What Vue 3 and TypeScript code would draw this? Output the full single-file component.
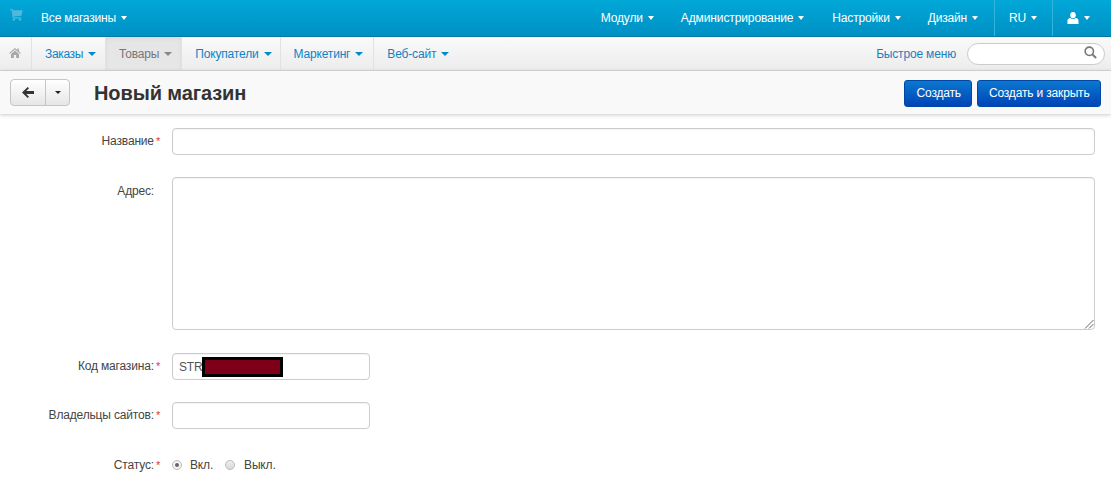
<script setup lang="ts">
const topRight = ['Модули', 'Администрирование', 'Настройки', 'Дизайн']
const subMenu = [
  { label: 'Заказы', active: false },
  { label: 'Товары', active: true },
  { label: 'Покупатели', active: false },
  { label: 'Маркетинг', active: false },
  { label: 'Веб-сайт', active: false },
]
</script>

<template>
  <div class="page">
    <header class="topbar">
      <div class="top-left">
        <svg class="cart" viewBox="0 0 14 13" width="13" height="12">
          <path fill="#4fb8dc" d="M0 0h2.6l.4 1.4h10.6l-1.2 5.8-8.4.8.2 1h8v1.3H2.9L1.7 1.3H0z" />
          <circle cx="4.2" cy="11.5" r="1.3" fill="#4fb8dc" />
          <circle cx="10.8" cy="11.5" r="1.3" fill="#4fb8dc" />
        </svg>
        <span class="store">Все магазины<i class="caret white"></i></span>
      </div>
      <nav class="top-right">
        <span v-for="m in topRight" :key="m" class="top-item">{{ m }}<i class="caret white"></i></span>
        <span class="top-item boxed lang">RU<i class="caret white"></i></span>
        <span class="top-item boxed user">
          <svg viewBox="0 0 12 13" width="12" height="12">
            <ellipse cx="6" cy="3.4" rx="3" ry="3.3" fill="#fff" />
            <path fill="#fff" d="M0 13V9.6C0 7.8 1.4 6.8 3 6.6c.8.7 1.9 1 3 1s2.200-.3 3-1c1.600.2 3 1.200 3 3V13z" />
          </svg>
          <i class="caret white"></i>
        </span>
      </nav>
    </header>

    <div class="subbar">
      <div class="sub-left">
        <span class="home">
          <svg viewBox="0 0 14 12" width="12" height="10">
            <path fill="#a9a9a9" d="M7 0 0 6l.8.9L7 1.700l6.200 5.200.8-.9-2.300-2V.6H10v2.100zM2.200 7.200V12h3.400V8.500h2.800V12h3.400V7.200L7 3.100z" />
          </svg>
        </span>
        <span v-for="s in subMenu" :key="s.label" class="sub-item" :class="{ active: s.active }">{{ s.label }}<i class="caret"></i></span>
      </div>
      <div class="sub-right">
        <span class="quick">Быстрое меню</span>
        <div class="search">
          <svg viewBox="0 0 14 14" width="13" height="13">
            <circle cx="5.700" cy="5.700" r="4.500" fill="none" stroke="#777" stroke-width="1.700" />
            <path d="m9 9 4 4" stroke="#777" stroke-width="2.200" />
          </svg>
        </div>
      </div>
    </div>

    <div class="actionbar">
      <div class="action-left">
        <div class="btn-group">
          <span class="back">
            <svg viewBox="0 0 12 11" width="12" height="11">
              <path fill="#333" d="M5.700 0 7 1.300 4.300 4H12v3H4.300L7 9.700 5.700 11 0 5.500z" />
            </svg>
          </span>
          <span class="drop"><i class="caret dark"></i></span>
        </div>
        <h1>Новый магазин</h1>
      </div>
      <div class="action-right">
        <span class="primary">Создать</span>
        <span class="primary">Создать и закрыть</span>
      </div>
    </div>

    <form class="form">
      <div class="row r-name">
        <label>Название<b>*</b></label>
        <div class="input full"></div>
      </div>
      <div class="row r-addr">
        <label class="no-star">Адрес:</label>
        <div class="textarea">
          <svg class="grip" viewBox="0 0 10 10" width="10" height="10">
            <path d="M9.500 1 1 9.500M9.500 5 5 9.500" stroke="#666" stroke-width="1" />
          </svg>
        </div>
      </div>
      <div class="row r-code">
        <label>Код магазина:<b>*</b></label>
        <div class="input small"><span class="str">STR</span><span class="redact"></span></div>
      </div>
      <div class="row r-owner">
        <label>Владельцы сайтов:<b>*</b></label>
        <div class="input small"></div>
      </div>
      <div class="row r-status">
        <label>Статус:<b>*</b></label>
        <div class="radios">
          <span class="radio on"></span><span class="r-label">Вкл.</span>
          <span class="radio"></span><span class="r-label off">Выкл.</span>
        </div>
      </div>
    </form>
  </div>
</template>

<style>
html, body { margin: 0; background: #fff; }
</style>

<style scoped>
.page {
  width: 1111px;
  height: 495px;
  overflow: hidden;
  font-family: "Liberation Sans", Arial, sans-serif;
  font-size: 12px;
  letter-spacing: -0.17px;
  color: #333;
  position: relative;
}
.caret {
  display: inline-block;
  width: 0;
  height: 0;
  margin-left: 5px;
  vertical-align: middle;
  border-left: 4px solid transparent;
  border-right: 4px solid transparent;
  border-top: 4px solid #0088cc;
}
.caret.white {
  border-top: 4px solid #fff;
  border-left-width: 3.5px;
  border-right-width: 3.5px;
}
.caret.dark {
  border-top: 3px solid #222;
  border-left-width: 3.5px;
  border-right-width: 3.5px;
  margin: 0;
}

.topbar {
  height: 37px;
  box-sizing: border-box;
  display: flex;
  justify-content: space-between;
  background: linear-gradient(to bottom, #00a8d8, #0090c4);
  border-bottom: 1px solid #0278a3;
  color: #fff;
}
.top-left { display: flex; align-items: center; padding-left: 10px; }
.cart { margin-top: -6px; }
.store { margin-left: 18px; display: flex; align-items: center; }
.top-right { display: flex; align-items: stretch; }
.top-item { display: flex; align-items: center; padding: 0 0 0 27px; }
.top-item:nth-child(1) { padding-left: 0; }
.top-item:nth-child(2) { letter-spacing: -0.11px; }
.top-item:nth-child(3) { padding-left: 28px; }
.boxed { border-left: 1px solid #33b4dc; margin-left: 16px; }
.lang { padding: 0 15px 0 14px; }
.user { margin-left: 0; padding: 0 21px 0 14px; }

.subbar {
  height: 34px;
  box-sizing: border-box;
  display: flex;
  justify-content: space-between;
  background: linear-gradient(to bottom, #fafafa, #ececec);
  border-bottom: 1px solid #d9d9d9;
}
.sub-left { display: flex; }
.home {
  width: 32px;
  box-sizing: border-box;
  display: flex;
  align-items: center;
  justify-content: center;
  padding: 0 2px 2px 0;
  border-right: 1px solid #e2e2e2;
}
.sub-item {
  display: flex;
  align-items: center;
  padding: 0 9px 0 13px;
  color: #0a84c6;
  border-right: 1px solid #e2e2e2;
}
.sub-item:nth-child(2) { letter-spacing: -0.35px; }
.sub-item:nth-child(4) { padding-right: 8px; }
.sub-item:nth-child(5) { padding-right: 10px; }
.sub-item:last-child { border-right: none; }
.sub-item.active {
  color: #777;
  background: #e6e6e6;
  box-shadow: inset 0 2px 4px rgba(0, 0, 0, 0.05);
}
.sub-item.active .caret { border-top-color: #888; }
.sub-right { display: flex; align-items: center; padding-right: 6px; }
.quick { color: #1a80bd; margin-right: 11px; }
.search {
  width: 138px;
  height: 22px;
  box-sizing: border-box;
  background: #fff;
  border: 1px solid #ccc;
  border-radius: 11px;
  display: flex;
  justify-content: flex-end;
  padding: 2px 7px 0 0;
}

.actionbar {
  height: 43px;
  box-sizing: border-box;
  display: flex;
  justify-content: space-between;
  align-items: center;
  padding: 0 10px;
  background: #f9f9f9;
  box-shadow: 0 1px 4px rgba(0, 0, 0, 0.22);
  position: relative;
}
.action-left { display: flex; align-items: center; }
.btn-group {
  display: flex;
  height: 27px;
  box-sizing: border-box;
  border: 1px solid #c5c5c5;
  border-radius: 4px;
  background: linear-gradient(to bottom, #fff, #e6e6e6);
  margin-right: 24px;
}
.back {
  width: 34px;
  display: flex;
  align-items: center;
  justify-content: center;
  border-right: 1px solid #c5c5c5;
}
.drop {
  width: 23px;
  display: flex;
  align-items: center;
  justify-content: center;
}
h1 {
  margin: 0;
  padding-top: 2px;
  font-size: 20px;
  line-height: 27px;
  font-weight: bold;
  letter-spacing: -0.1px;
  color: #333;
}
.action-right { display: flex; gap: 5px; padding-top: 1px; }
.primary {
  height: 27px;
  box-sizing: border-box;
  display: flex;
  align-items: center;
  padding: 0 10.5px;
  color: #fff;
  border-radius: 3px;
  border: 1px solid #0047a8;
  background: linear-gradient(to bottom, #0a78cf, #0044b8);
}
.primary:first-child { padding-left: 11.5px; }

.form { display: block; }
.row { display: flex; align-items: flex-start; }
.row label {
  width: 160px;
  box-sizing: border-box;
  text-align: right;
  line-height: 26px;
  color: #444;
  flex: none;
}
.row label.no-star { padding-right: 6px; line-height: 28px; }
.row label b { color: #e0324a; font-weight: normal; margin-left: 2px; font-size: 11px; }
.input, .textarea {
  margin-left: 12px;
  box-sizing: border-box;
  border: 1px solid #ccc;
  border-radius: 4px;
  background: #fff;
  box-shadow: inset 0 1px 1px rgba(0, 0, 0, 0.05);
}
.input { height: 27px; }
.full { width: 923px; }
.small {
  width: 198px;
  padding-left: 6px;
  line-height: 24px;
  display: flex;
  align-items: center;
  color: #555;
}
.str { width: 23px; flex: none; }
.redact {
  width: 75px;
  height: 14px;
  background: #7e0018;
  border: 3px solid #000;
}
.textarea { width: 923px; height: 153px; position: relative; }
.grip { position: absolute; right: 0; bottom: 0; }
.r-name { padding-top: 14px; }
.r-addr { padding-top: 22px; }
.r-code { padding-top: 23px; }
.r-owner { padding-top: 22px; }
.r-status { padding-top: 23px; }
.radios {
  margin-left: 12px;
  height: 26px;
  display: flex;
  align-items: center;
  color: #444;
}
.radio {
  width: 10px;
  height: 10px;
  box-sizing: border-box;
  border-radius: 50%;
  border: 1px solid #bbb;
  background: linear-gradient(to bottom, #eee, #d8d8d8);
  position: relative;
}
.radio.on { background: #f4f4f4; }
.radio.on::after {
  content: "";
  position: absolute;
  left: 2px;
  top: 2px;
  width: 4px;
  height: 4px;
  border-radius: 50%;
  background: #666;
}
.r-label { margin-left: 8px; margin-right: 12px; }
.r-label.off { margin-left: 9px; }
</style>
